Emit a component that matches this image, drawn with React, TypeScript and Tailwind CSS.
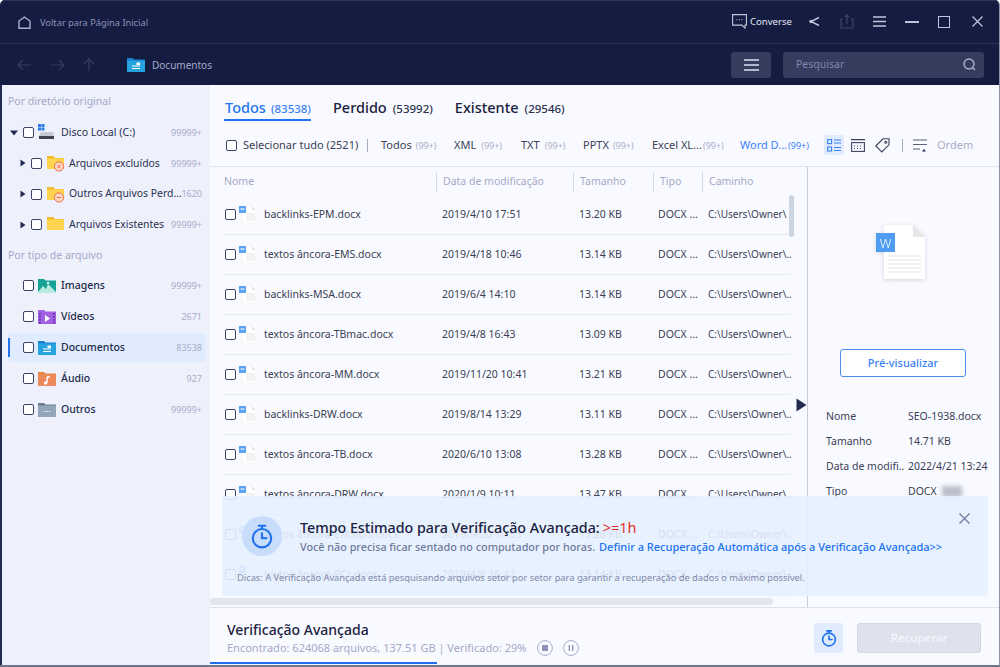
const rows = [
  ["backlinks-EPM.docx", "2019/4/10 17:51", "13.20 KB"],
  ["textos âncora-EMS.docx", "2019/4/18 10:46", "13.14 KB"],
  ["backlinks-MSA.docx", "2019/6/4 14:10", "13.14 KB"],
  ["textos âncora-TBmac.docx", "2019/4/8 16:43", "13.09 KB"],
  ["textos âncora-MM.docx", "2019/11/20 10:41", "13.21 KB"],
  ["backlinks-DRW.docx", "2019/8/14 13:29", "13.11 KB"],
  ["textos âncora-TB.docx", "2020/6/10 13:08", "13.28 KB"],
  ["textos âncora-DRW.docx", "2020/1/9 10:11", "13.47 KB"],
  ["textos âncora-EMSIOS.docx", "2019/9/20 10:55", "13.28 KB"],
  ["textos âncora-PCt.docx", "2019/4/8 16:42", "13.14 KB"],
];

function Check({ className = "" }: { className?: string }) {
  return <span className={"block w-[11px] h-[11px] shrink-0 rounded-[2px] border border-[#3d4463] bg-white " + className} />;
}

function Caret() {
  return (
    <svg width="6" height="8" viewBox="0 0 6 8" className="shrink-0">
      <path d="M0.5 0.5L5.5 4L0.5 7.5Z" fill="#232b52" />
    </svg>
  );
}

function Folder({ badge }: { badge?: "x" | "minus" }) {
  return (
    <svg width="18" height="17" viewBox="0 0 18 17" className="shrink-0">
      <path d="M0 1h6.5L8 3h9v11H0Z" fill="#f5b82e" />
      <rect x="0" y="3.5" width="17" height="10.5" fill="#fed44f" />
      {badge && <circle cx="12" cy="11.5" r="4.6" fill="#fbd9c4" stroke="#ef6a4b" strokeWidth="1" />}
      {badge === "x" && <path d="M10.4 9.9l3.2 3.2M13.6 9.9l-3.2 3.2" stroke="#ef6a4b" strokeWidth="1" />}
      {badge === "minus" && <path d="M9.8 11.5h4.4" stroke="#ef6a4b" strokeWidth="1.2" />}
    </svg>
  );
}

function DocIcon() {
  return (
    <svg width="18" height="19" viewBox="0 0 18 19" className="shrink-0">
      <path d="M3 1h10l4 4v13H3Z" fill="#ffffff" stroke="#f0f0f4" strokeWidth="0.6" />
      <path d="M13 1l4 4h-4Z" fill="#e6e6e9" />
      <path d="M7 9h9M7 11h9M7 13h9M7 15h9" stroke="#e7e7ea" strokeWidth="1" />
      <rect x="0" y="1" width="7" height="7" fill="#5aa2f3" />
      <path d="M1.5 4h4" stroke="#d7e8fd" strokeWidth="1.4" />
    </svg>
  );
}

function TypeIcon({ kind }: { kind: string }) {
  if (kind === "img")
    return (
      <svg width="18" height="14" viewBox="0 0 18 14" className="shrink-0">
        <path d="M0 0h6l1.5 1.5H18V14H0Z" fill="#14a394" />
        <path d="M0 13l5-6 3 3 2-5 8 8v1H0Z" fill="#b9ece0" />
        <circle cx="10" cy="4" r="1.3" fill="#c9f2e8" />
      </svg>
    );
  if (kind === "vid")
    return (
      <svg width="18" height="14" viewBox="0 0 18 14" className="shrink-0">
        <path d="M0 0h6l1.5 1.5H18V14H0Z" fill="#a15fe2" />
        <path d="M7 5l5 3.5-5 3.5Z" fill="#fff" />
        <path d="M2 3v11M16 3v11" stroke="#6c35ae" strokeWidth="2" strokeDasharray="1.5 1.5" />
      </svg>
    );
  if (kind === "doc")
    return (
      <svg width="18" height="14" viewBox="0 0 18 14" className="shrink-0">
        <path d="M0 0h6l1.5 1.5H18V14H0Z" fill="#1a7fd0" />
        <rect x="0" y="2.5" width="18" height="11.5" fill="#27a3e0" />
        <path d="M5 8h8M5 10.5h8" stroke="#fff" strokeWidth="1" />
        <rect x="9.5" y="4.5" width="3.5" height="2.5" fill="#fff" />
      </svg>
    );
  if (kind === "aud")
    return (
      <svg width="18" height="14" viewBox="0 0 18 14" className="shrink-0">
        <path d="M0 0h6l1.5 1.5H18V14H0Z" fill="#e8863f" />
        <rect x="0" y="2.5" width="18" height="11.5" fill="#ec8a5e" />
        <path d="M9 5v6M9 5h3" stroke="#fff" strokeWidth="1.4" />
        <circle cx="7.6" cy="11" r="1.7" fill="#fff" />
      </svg>
    );
  return (
    <svg width="18" height="14" viewBox="0 0 18 14" className="shrink-0">
      <path d="M0 0h6l1.5 1.5H18V14H0Z" fill="#6c7c92" />
      <rect x="0" y="2.5" width="18" height="11.5" fill="#94a5ba" />
      <path d="M6 8.5h1.2M8.5 8.5h1.2M11 8.5h1.2" stroke="#fff" strokeWidth="1.2" />
    </svg>
  );
}

function Stopwatch({ size = 24, w = 2 }: { size?: number; w?: number }) {
  return (
    <svg width={size} height={size} viewBox="0 0 24 24" fill="none" stroke="#2274ee" strokeWidth={w} strokeLinecap="round">
      <circle cx="12" cy="14" r="8.5" />
      <path d="M9 2.5h6M12 2.5v3M12 9.5V14h4" />
    </svg>
  );
}

function TreeRow({ label, count, badge }: { label: string; count: string; badge?: "x" | "minus" }) {
  return (
    <div className="flex items-center h-[30.75px] pl-[18px] pr-[8px]">
      <Caret />
      <Check className="ml-[5px]" />
      <span className="ml-[5px]"><Folder badge={badge} /></span>
      <span className="ml-[4px] flex-1 min-w-0 whitespace-nowrap text-[10.4px] text-[#2a3050]">{label}</span>
      <span className="text-[9px] text-[#a9adc9]">{count}</span>
    </div>
  );
}

function TypeRow({ kind, label, count, active }: { kind: string; label: string; count: string; active?: boolean }) {
  return (
    <div className={"relative flex items-center h-[29px] my-[1px] ml-[6px] mr-[4px] pl-[15px] pr-[4px] rounded-[3px] " + (active ? "bg-[#e0ebfd]" : "")}>
      {active && <span className="absolute left-0 top-[5px] bottom-[5px] w-[2px] bg-[#2274ee]" />}
      <Check />
      <span className="ml-[4px]"><TypeIcon kind={kind} /></span>
      <span className="ml-[5px] flex-1 text-[10.5px] font-medium text-[#222a4c]">{label}</span>
      <span className="text-[9px] text-[#a9adc9]">{count}</span>
    </div>
  );
}

function Filter({ label, count, width, gap, active }: { label: string; count: string; width: string; gap: string; active?: boolean }) {
  return (
    <span className={"flex items-baseline whitespace-nowrap shrink-0 " + width + " " + gap}>
      <span className={"text-[11px] " + (active ? "text-[#3b82f6]" : "text-[#3a3f56]")}>{label}</span>
      <span className={"text-[9px] " + (active ? "text-[#3b82f6]" : "text-[#a9adc9]")}>{count}</span>
    </span>
  );
}

function Tab({ label, count, active }: { label: string; count: string; active?: boolean }) {
  return (
    <div className={"h-[24px] flex items-baseline " + (active ? "gap-[5px] border-b-2 border-[#2274ee] -ml-px pl-px" : "gap-[6px]")}>
      <span className={"text-[14.5px] leading-[20px] font-medium " + (active ? "text-[#2274ee]" : "text-[#1a2140]")}>{label}</span>
      <span className={"text-[11.5px] font-medium " + (active ? "text-[#3b82f6]" : "text-[#2d3350]")}>{count}</span>
    </div>
  );
}

function HeaderCell({ label, width, first }: { label: string; width: string; first?: boolean }) {
  return (
    <div className={"flex items-center h-full shrink-0 " + width}>
      {!first && <span className="w-px h-[20px] bg-[#d5d9e6] mr-[6px]" />}
      <span className="text-[10.5px] text-[#a5a9c8] whitespace-nowrap">{label}</span>
    </div>
  );
}

function Detail({ label, children }: { label: string; children: React.ReactNode }) {
  return (
    <div className="h-[25px] flex items-center text-[10.5px] text-[#3a3f56] whitespace-nowrap">
      <span className="w-[82px] shrink-0">{label}</span>
      {children}
    </div>
  );
}

export default function App() {
  return (
    <div
      className="w-[1000px] h-[667px] overflow-hidden flex flex-col bg-[#f9faff] text-[11px] rounded-t-[5px] border-r border-b-2 border-r-[#8d92a6] border-b-[#6f7488]"
      style={{ fontFamily: '"Noto Sans", sans-serif' }}
    >
      {/* title bar */}
      <div className="h-[44px] shrink-0 flex items-center bg-[#141c42] border-t border-t-[#2e3558] border-b border-b-[#2a3259] pl-[18px] pr-[16px]">
        <svg width="13" height="13" viewBox="0 0 13 13" fill="none" stroke="#aab0cc" strokeWidth="1.4">
          <path d="M1 12.3V5L6.5 1 12 5v7.3Z" />
        </svg>
        <span className="ml-[9px] pt-[1px] text-[9.25px] text-[#8c93b8]">Voltar para Página Inicial</span>
        <div className="ml-auto flex items-center">
          <svg width="15" height="15" viewBox="0 0 15 15" fill="none" stroke="#c0c5dc" strokeWidth="1.1">
            <path d="M0.6 0.6h13.8v10.5H13v3l-3-3H0.6Z" />
            <path d="M4.5 5.8h1M7 5.8h1M9.5 5.8h1" />
          </svg>
          <span className="ml-[3px] pt-[1px] text-[9.6px] text-[#e3e6f2]">Converse</span>
          <svg className="ml-[17px]" width="11" height="11" viewBox="0 0 11 11" fill="none" stroke="#c0c5dc" strokeWidth="1.4">
            <path d="M10 1.5L2 5.5l8 4" />
            <circle cx="2" cy="5.5" r="1" fill="#c0c5dc" />
          </svg>
          <svg className="ml-[20px]" width="14" height="15" viewBox="0 0 14 15" fill="none" stroke="#3c4468" strokeWidth="1.2">
            <path d="M3 5H1v9h12V5h-2M7 10V1M5 3l2-2 2 2" />
          </svg>
          <svg className="ml-[19px]" width="13" height="11" viewBox="0 0 13 11" fill="none" stroke="#c0c5dc" strokeWidth="1.3">
            <path d="M0 1h13M0 5.5h13M0 10h13" />
          </svg>
          <span className="ml-[19px] block w-[14px] h-[1.5px] bg-[#c0c5dc]" />
          <span className="ml-[19px] block w-[12px] h-[12px] border-[1.5px] border-[#c0c5dc]" />
          <svg className="ml-[22px]" width="11" height="11" viewBox="0 0 11 11" fill="none" stroke="#c0c5dc" strokeWidth="1.2">
            <path d="M0.5 0.5l10 10M10.5 0.5l-10 10" />
          </svg>
        </div>
      </div>

      {/* navigation bar */}
      <div className="h-[41px] shrink-0 flex items-center bg-[#141c42] pl-[17px] pr-[15px]">
        <svg width="80" height="14" viewBox="0 0 80 14" fill="none" stroke="#343c62" strokeWidth="1.2">
          <path d="M14 7H1M6 2L1 7l5 5" />
          <path d="M34 7h13M42 2l5 5-5 5" />
          <path d="M72 13V1M67 6l5-5 5 5" />
        </svg>
        <span className="ml-[30px]"><TypeIcon kind="doc" /></span>
        <span className="ml-[7px] pt-[1px] text-[10px] text-[#a5abc9]">Documentos</span>
        <div className="ml-auto flex items-center gap-[12px]">
          <div className="w-[40px] h-[26px] rounded-[3px] bg-[#353c5e] flex items-center justify-center">
            <svg width="15" height="12" viewBox="0 0 15 12" fill="none" stroke="#b1b7cf" strokeWidth="2">
              <path d="M0 1h15M0 6h15M0 11h15" />
            </svg>
          </div>
          <div className="w-[201px] h-[26px] rounded-[3px] bg-[#353c5e] flex items-center justify-between pl-[13px] pr-[8px]">
            <span className="pt-[1px] text-[10.5px] text-[#7f88b3]">Pesquisar</span>
            <svg width="13" height="13" viewBox="0 0 13 13" fill="none" stroke="#a6acc6" strokeWidth="1.5">
              <circle cx="6" cy="6" r="5" />
              <path d="M9.5 9.5l2.5 2.5" />
            </svg>
          </div>
        </div>
      </div>

      <div className="flex-1 min-h-0 flex">
        {/* sidebar */}
        <aside className="w-[210px] shrink-0 bg-[#eef0fb] border-l-2 border-[#232b52] flex flex-col pt-[7px]">
          <div className="pl-[6px] h-[20px] flex items-center text-[10.5px] text-[#a5a9c8]">Por diretório original</div>
          <div className="mt-[5px] flex items-center h-[31px] pl-[8px] pr-[8px]">
            <svg width="8" height="6" viewBox="0 0 8 6" className="shrink-0"><path d="M0 0.5h8L4 5.5Z" fill="#232b52" /></svg>
            <Check className="ml-[5px]" />
            <svg width="18" height="17" viewBox="0 0 18 17" className="ml-[4px] shrink-0">
              <rect x="0" y="0" width="3" height="3" fill="#2a7de8" />
              <rect x="3.5" y="0" width="3" height="3" fill="#2a7de8" />
              <rect x="0" y="3.5" width="3" height="3" fill="#2a7de8" />
              <rect x="3.5" y="3.5" width="3" height="3" fill="#2a7de8" />
              <path d="M3 8h12l1 4H1Z" fill="#c5c9d2" />
              <rect x="1" y="12" width="15" height="3" fill="#3f4452" />
            </svg>
            <span className="ml-[5px] flex-1 text-[10.6px] text-[#2a3050]">Disco Local (C:)</span>
            <span className="text-[9px] text-[#a9adc9]">99999+</span>
          </div>
          <TreeRow label="Arquivos excluídos" count="99999+" badge="x" />
          <TreeRow label="Outros Arquivos Perd..." count="1620" badge="minus" />
          <TreeRow label="Arquivos Existentes" count="99999+" />
          <div className="mt-[5.75px] pl-[6px] h-[20px] flex items-center text-[10.5px] text-[#a5a9c8]">Por tipo de arquivo</div>
          <div className="mt-[4px] flex flex-col">
            <TypeRow kind="img" label="Imagens" count="99999+" />
            <TypeRow kind="vid" label="Vídeos" count="2671" />
            <TypeRow kind="doc" label="Documentos" count="83538" active />
            <TypeRow kind="aud" label="Áudio" count="927" />
            <TypeRow kind="oth" label="Outros" count="99999+" />
          </div>
        </aside>

        {/* main */}
        <main className="relative flex-1 min-w-0 flex flex-col">
          <div className="h-[37px] shrink-0 flex items-start pt-[12px] pl-[15px] gap-[22px]">
            <Tab label="Todos" count="(83538)" active />
            <Tab label="Perdido" count="(53992)" />
            <Tab label="Existente" count="(29546)" />
          </div>

          <div className="h-[45px] shrink-0 flex items-center border-b border-[#e2e4f0] pl-[16px] pt-[2px]">
            <Check />
            <span className="ml-[6px] w-[115px] shrink-0 text-[11px] text-[#3a3f56] whitespace-nowrap">Selecionar tudo (2521)</span>
            <span className="ml-[9px] w-px h-[13px] bg-[#a9adc0]" />
            <span className="ml-[13px] flex items-center">
              <Filter label="Todos" count="(99+)" width="w-[73px]" gap="gap-[4px]" />
              <Filter label="XML" count="(99+)" width="w-[67px]" gap="gap-[5px]" />
              <Filter label="TXT" count="(99+)" width="w-[62px]" gap="gap-[5px]" />
              <Filter label="PPTX" count="(99+)" width="w-[69px]" gap="gap-[4px]" />
              <Filter label="Excel XL..." count="(99+)" width="w-[88px]" gap="gap-px" />
              <Filter label="Word D..." count="(99+)" width="w-[84px]" gap="gap-px" active />
            </span>
            <span className="w-[20px] h-[20px] shrink-0 rounded-[2px] bg-[#e0ebfd] flex items-center justify-center">
              <svg width="14" height="13" viewBox="0 0 14 13" fill="none" stroke="#3b82f6" strokeWidth="1.1">
                <rect x="0.6" y="0.6" width="4" height="4" />
                <rect x="0.6" y="8" width="4" height="4" />
                <path d="M7 1h7M7 4h7M7 8.5h7M7 11.5h7" />
              </svg>
            </span>
            <svg className="ml-[7px] shrink-0" width="14" height="13" viewBox="0 0 14 13" fill="none" stroke="#3e4560" strokeWidth="1.1">
              <path d="M0 0.6h14" />
              <rect x="0.6" y="3.6" width="12.8" height="8.8" />
              <path d="M3 7h1M6 7h1M9 7h1M3 9.5h1M6 9.5h1M9 9.5h1" />
            </svg>
            <svg className="ml-[10px] shrink-0" width="15" height="15" viewBox="0 0 15 15" fill="none" stroke="#3e4560" strokeWidth="1.1">
              <path d="M0.8 8L8 0.8h6v6L6.8 14Z" />
              <circle cx="10.8" cy="4.2" r="1" />
            </svg>
            <span className="ml-[12px] w-px h-[13px] shrink-0 bg-[#a9adc0]" />
            <svg className="ml-[10px] shrink-0" width="14" height="13" viewBox="0 0 14 13" fill="none" stroke="#5b6178" strokeWidth="1.1">
              <path d="M0 1h14M0 5.5h14M0 10h7" />
              <path d="M9 12.5l2-2.5 2 2.5Z" fill="#232b52" stroke="none" />
            </svg>
            <span className="ml-[10px] text-[11px] text-[#a9adc9]">Ordem</span>
          </div>

          <div className="flex-1 min-h-0 flex">
            {/* file list */}
            <div className="w-[597px] shrink-0 flex flex-col">
              <div className="relative flex-1 min-h-0 overflow-hidden">
                <div className="h-[28px] pt-[1px] flex items-center pl-[14px]">
                  <HeaderCell label="Nome" width="w-[212px]" first />
                  <HeaderCell label="Data de modificação" width="w-[137px]" />
                  <HeaderCell label="Tamanho" width="w-[80px]" />
                  <HeaderCell label="Tipo" width="w-[49px]" />
                  <HeaderCell label="Caminho" width="w-[80px]" />
                </div>
                {rows.map((r, i) => (
                  <div key={r[0]} className="h-[40px] ml-[12px] w-[568px] pl-[3px] border-b border-[#e8eaf2] flex items-center text-[10.5px] text-[#3a3f56] whitespace-nowrap">
                    <div className="w-[217px] shrink-0 flex items-center">
                      <Check />
                      <span className="ml-[3px]"><DocIcon /></span>
                      <span className="ml-[7px]">{r[0]}</span>
                    </div>
                    <span className="w-[137px] shrink-0">{r[1]}</span>
                    <span className="w-[79px] shrink-0">{r[2]}</span>
                    <span className="w-[50px] shrink-0">DOCX ...</span>
                    <span className="text-[10px]">{i === 0 ? "C:\\Users\\Owner\\" : "C:\\Users\\Owner\\.."}</span>
                  </div>
                ))}
                <span className="absolute left-[579px] top-[28px] w-[5px] h-[42px] rounded-full bg-[#ccd5e2]" />
              </div>
              <div className="h-[10px] shrink-0 pt-px pb-[2px]">
                <div className="w-[563px] h-[7px] rounded-full bg-[#e3e6ee]" />
              </div>
            </div>

            {/* preview panel */}
            <div className="relative flex-1 min-w-0 border-l border-[#c9ccda] pl-[18px] pt-[58px] overflow-hidden">
              <svg width="49" height="54" viewBox="0 0 49 54" className="ml-[50px] drop-shadow-sm">
                <path d="M8 0h29l12 12v42H8Z" fill="#ffffff" />
                <path d="M37 0l12 12H37Z" fill="#e6e6e6" />
                <path d="M12 31h33M12 35h33M12 39h33M12 43h33M12 47h33" stroke="#e4e4e6" strokeWidth="1.2" />
                <rect x="0" y="8" width="19" height="19" fill="#4f9df2" />
                <text x="9.5" y="22.5" textAnchor="middle" fontSize="13" fontWeight="300" fill="#ffffff" fontFamily="Noto Sans, sans-serif">W</text>
              </svg>
              <div className="mt-[70px] ml-[14px] w-[126px] h-[28px] rounded-[3px] border border-[#4b8ef0] bg-white flex items-center justify-center text-[11px] font-medium text-[#3b82f6]">
                Pré-visualizar
              </div>
              <div className="mt-[27px]">
                <Detail label="Nome">SEO-1938.docx</Detail>
                <Detail label="Tamanho">14.71 KB</Detail>
                <Detail label="Data de modifi..">2022/4/21 13:24</Detail>
                <Detail label="Tipo">
                  DOCX
                  <span className="ml-[5px] w-[20px] h-[11px] bg-[#b9bdc9] blur-[2px]" />
                </Detail>
              </div>
            </div>
          </div>

          {/* bottom status */}
          <div className="h-[58px] shrink-0 border-t border-[#dfe2ee] bg-[#f9faff] flex flex-col">
            <div className="flex-1 min-h-0 flex items-start pl-[17px] pr-[18px]">
              <div className="pt-[11px]">
                <div className="h-[20px] flex items-center text-[14px] font-medium text-[#1a2140] whitespace-nowrap">Verificação Avançada</div>
                <div className="mt-px h-[16px] flex items-center text-[11px] text-[#a5a9c8] whitespace-nowrap">
                  <span className="w-[297px] shrink-0">Encontrado: 624068 arquivos, 137.51 GB | Verificado: 29%</span>
                  <svg className="ml-[13px]" width="16" height="16" viewBox="0 0 16 16" fill="none" stroke="#a5a9c8" strokeWidth="1">
                    <circle cx="8" cy="8" r="7.4" />
                    <rect x="5" y="5" width="6" height="6" fill="#8e94b5" stroke="none" />
                  </svg>
                  <svg className="ml-[10px]" width="16" height="16" viewBox="0 0 16 16" fill="none" stroke="#a5a9c8" strokeWidth="1">
                    <circle cx="8" cy="8" r="7.4" />
                    <path d="M6.3 5v6M9.7 5v6" stroke="#8e94b5" strokeWidth="1.4" />
                  </svg>
                </div>
              </div>
              <div className="ml-auto mt-[15px] flex items-center gap-[14px]">
                <div className="w-[29px] h-[30px] rounded-[3px] bg-[#e0ebfd] flex items-center justify-center">
                  <Stopwatch size={18} w={2.2} />
                </div>
                <div className="w-[124px] h-[30px] rounded-[3px] border border-[#d2d6e6] bg-[#dfe1ed] flex items-center justify-center text-[11.5px] font-medium text-[#f5f6fb]">
                  Recuperar
                </div>
              </div>
            </div>
            <div className="w-[227px] h-[2px] mb-[1px] bg-[#1f6ff0]" />
          </div>

          {/* collapse arrow, sits on the panel border */}
          <svg className="absolute left-[586px] top-[313px]" width="11" height="14" viewBox="0 0 11 14">
            <path d="M0.5 0.5L10.5 7L0.5 13.5Z" fill="#232b52" />
          </svg>

          {/* estimate banner */}
          <div className="absolute left-[12px] top-[411px] w-[766px] h-[100px] rounded-[3px] bg-[#e6f0fe]/90 pl-[20px] pt-[20px]">
            <div className="flex items-start">
              <div className="w-[40px] h-[40px] shrink-0 rounded-full bg-[#c8dcfc] flex items-center justify-center">
                <Stopwatch size={26} w={2} />
              </div>
              <div className="ml-[18px]">
                <div className="h-[24px] flex items-center gap-[3px] whitespace-nowrap">
                  <span className="text-[14.25px] font-medium text-[#1a2140]">Tempo Estimado para Verificação Avançada:</span>
                  <span className="text-[14.5px] text-[#e0301e]">&gt;=1h</span>
                </div>
                <div className="h-[15px] flex items-center gap-[4px] whitespace-nowrap font-medium">
                  <span className="text-[10.8px] text-[#6f7a9c]">Você não precisa ficar sentado no computador por horas.</span>
                  <span className="text-[11px] text-[#2274ee]">Definir a Recuperação Automática após a Verificação Avançada&gt;&gt;</span>
                </div>
              </div>
            </div>
            <div className="mt-[15px] -ml-[5px] text-[9.3px] text-[#7f88a8] whitespace-nowrap">
              Dicas: A Verificação Avançada está pesquisando arquivos setor por setor para garantir a recuperação de dados o máximo possível.
            </div>
            <svg className="absolute right-[18px] top-[17px]" width="11" height="11" viewBox="0 0 11 11" fill="none" stroke="#7b84a6" strokeWidth="1.5">
              <path d="M0.5 0.5l10 10M10.5 0.5l-10 10" />
            </svg>
          </div>
        </main>
      </div>
    </div>
  );
}
